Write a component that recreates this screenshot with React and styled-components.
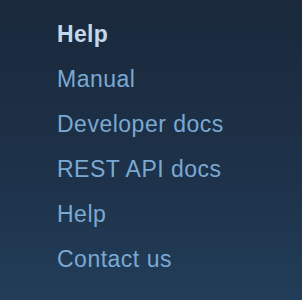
import React from "react";
import styled, { createGlobalStyle } from "styled-components";

const GlobalStyle = createGlobalStyle`
  html, body {
    margin: 0;
    padding: 0;
  }
  body {
    font-family: "Liberation Sans", Arial, sans-serif;
  }
`;

const Panel = styled.nav`
  width: 302px;
  height: 300px;
  box-sizing: border-box;
  padding: 12px 0 0 57px;
  background: linear-gradient(180deg, #1a293c 0%, #1d3148 55%, #223d59 100%);
  overflow: hidden;
`;

const Heading = styled.div`
  font-size: 23px;
  line-height: 45px;
  font-weight: 700;
  letter-spacing: 0.3px;
  color: #c2d8ec;
`;

const List = styled.ul`
  list-style: none;
  margin: 0;
  padding: 0;
`;

const Item = styled.li`
  font-size: 23px;
  line-height: 45px;
  letter-spacing: 0.5px;
`;

const NavLink = styled.a`
  color: #7aa9d4;
  text-decoration: none;
`;

const links = ["Manual", "Developer docs", "REST API docs", "Help", "Contact us"];

function App() {
  return (
    <>
      <GlobalStyle />
      <Panel>
        <Heading>Help</Heading>
        <List>
          {links.map((label) => (
            <Item key={label}>
              <NavLink href="#">{label}</NavLink>
            </Item>
          ))}
        </List>
      </Panel>
    </>
  );
}

export default App;
